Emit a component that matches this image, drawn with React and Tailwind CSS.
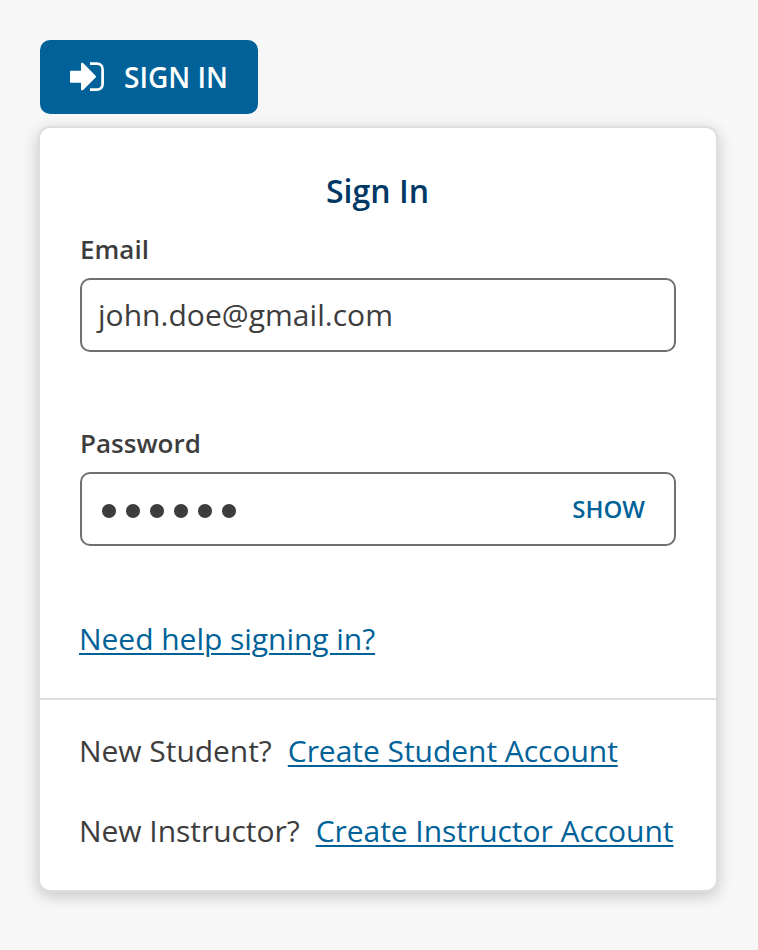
function SignInIcon() {
  return (
    <svg width="34" height="30" viewBox="0 0 34 30" className="shrink-0" aria-hidden="true">
      <path
        d="M1 8.8H11V1.9C11 .8 12.3 .3 13.1 1.1L25.6 13.8C26.1 14.3 26.1 15.1 25.6 15.6L13.1 28C12.3 28.8 11 28.3 11 27.2V20.8H1C.4 20.8 0 20.4 0 19.8V9.8C0 9.2.4 8.8 1 8.8Z"
        fill="currentColor"
      />
      <path
        d="M20 1.7H26.8C30.4 1.7 32.6 3.9 32.6 7.2V22C32.6 25.3 30.4 27.6 26.8 27.6H20"
        fill="none"
        stroke="currentColor"
        strokeWidth="2.7"
      />
    </svg>
  );
}

export default function App() {
  return (
    <div className="h-[950px] w-[758px] overflow-hidden bg-[#f7f7f7] pl-10 pt-10 font-['Open_Sans',sans-serif] text-[#3d3d3d]">
      <button className="flex h-[74px] w-[218px] items-center gap-5 rounded-[10px] bg-[#006298] pl-[30px] text-white">
        <SignInIcon />
        <span className="whitespace-nowrap text-[28px] font-semibold leading-[38px]">SIGN IN</span>
      </button>
      <main className="-ml-0.5 mt-3 h-[766px] w-[680px] rounded-xl border-2 border-[#dedede] bg-white shadow-[0_4px_16px_rgba(0,0,0,0.2)]">
        <form className="flex h-[572px] flex-col border-b-2 border-[#dedede] px-10 pt-[41px]">
          <h1 className="pr-px text-center text-[32px] font-semibold leading-[44px] text-[#003865]">Sign In</h1>
          <label className="mt-[18px] text-[26px] font-semibold leading-9">Email</label>
          <div className="mt-[11px] flex h-[74px] shrink-0 items-center rounded-[10px] border-2 border-[#707070] px-4 pb-0.5 text-[30px] tracking-[0.03px]">
            john.doe@gmail.com
          </div>
          <label className="mt-[73px] text-[26px] font-semibold leading-9">Password</label>
          <div className="mt-[11px] flex h-[74px] shrink-0 items-center justify-between rounded-[10px] border-2 border-[#707070] pl-5 pr-[29px]">
            <div className="flex gap-[10px] pt-1">
              {[0, 1, 2, 3, 4, 5].map((i) => (
                <span key={i} className="size-[14px] rounded-full bg-[#3d3d3d]" />
              ))}
            </div>
            <span className="text-[24px] font-semibold text-[#006298]">SHOW</span>
          </div>
          <a className="-ml-px mt-[72px] self-start whitespace-nowrap text-[30px] leading-[42px] tracking-[-0.04px] text-[#006298] underline decoration-2 underline-offset-[3px]">
            Need help signing in?
          </a>
        </form>
        <div className="flex flex-col gap-[38px] whitespace-nowrap pl-[39px] pt-[30px] text-[30px] leading-[42px] tracking-[-0.04px]">
          <p className="flex gap-4">
            New Student?
            <a className="text-[#006298] underline decoration-2 underline-offset-[3px]">Create Student Account</a>
          </p>
          <p className="flex gap-4">
            New Instructor?
            <a className="text-[#006298] underline decoration-2 underline-offset-[3px]">Create Instructor Account</a>
          </p>
        </div>
      </main>
    </div>
  );
}
